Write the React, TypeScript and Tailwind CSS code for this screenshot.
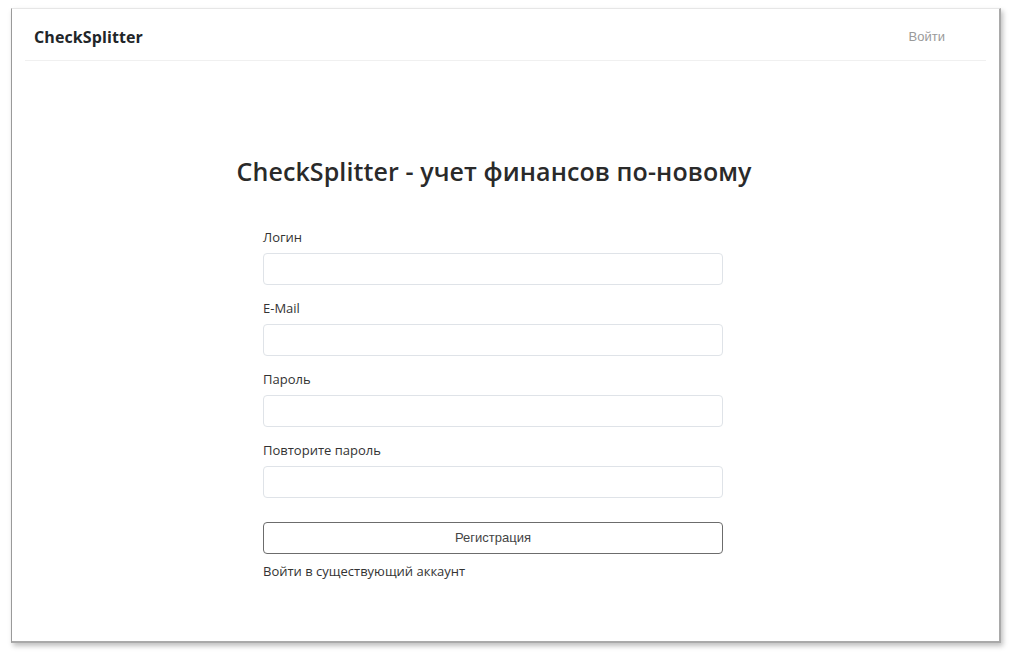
import React from 'react';

const fields = ['Логин', 'E-Mail', 'Пароль', 'Повторите пароль'];

export default function App() {
  return (
    <div className="w-[1012px] h-[658px] bg-white pt-[8px] pl-[11px] font-['Open_Sans',sans-serif]">
      <div className="w-[990px] h-[635px] bg-white border-l border-l-[#9a9a9a] border-t border-t-[#e6e6e6] border-r-2 border-r-[#a9a9a9] border-b-2 border-b-[#a9a9a9] shadow-[2px_3px_5px_rgba(0,0,0,0.25)]">
        {/* Navbar */}
        <div className="mx-[13px] h-[52px] flex items-center justify-between border-b border-[#f0f0f0]">
          <span className="pl-[9px] pt-[4px] text-[16px] font-bold text-[#212529] tracking-[0.1px]">CheckSplitter</span>
          <a className="pr-[41px] pt-[4px] text-[13px] text-[#9a9a9a] font-['Liberation_Sans',sans-serif]">Войти</a>
        </div>

        <div className="w-[560px] ml-[202px] pt-[94px]">
          <h1 className="text-center text-[25px] leading-[32px] font-semibold text-[#2a2a2a] tracking-[0.1px]">
            CheckSplitter - учет финансов по-новому
          </h1>

          <form className="w-[460px] ml-[49px] mt-[41px] flex flex-col">
            {fields.map((f) => (
              <div key={f} className="flex flex-col mb-[14px]">
                <label className="text-[13px] leading-[18px] text-[#333] mb-[7px]">{f}</label>
                <input
                  type="text"
                  className="h-[32px] w-full rounded-[4px] border border-[#dfe3e8] bg-white outline-none"
                />
              </div>
            ))}
            <button
              type="button"
              className="mt-[10px] h-[32px] w-full rounded-[4px] border border-[#6c6c6c] bg-white text-[13px] text-[#444] font-['Liberation_Sans',sans-serif]"
            >
              Регистрация
            </button>
            <a className="mt-[8px] text-[13px] leading-[18px] text-[#333]">Войти в существующий аккаунт</a>
          </form>
        </div>
      </div>
    </div>
  );
}
